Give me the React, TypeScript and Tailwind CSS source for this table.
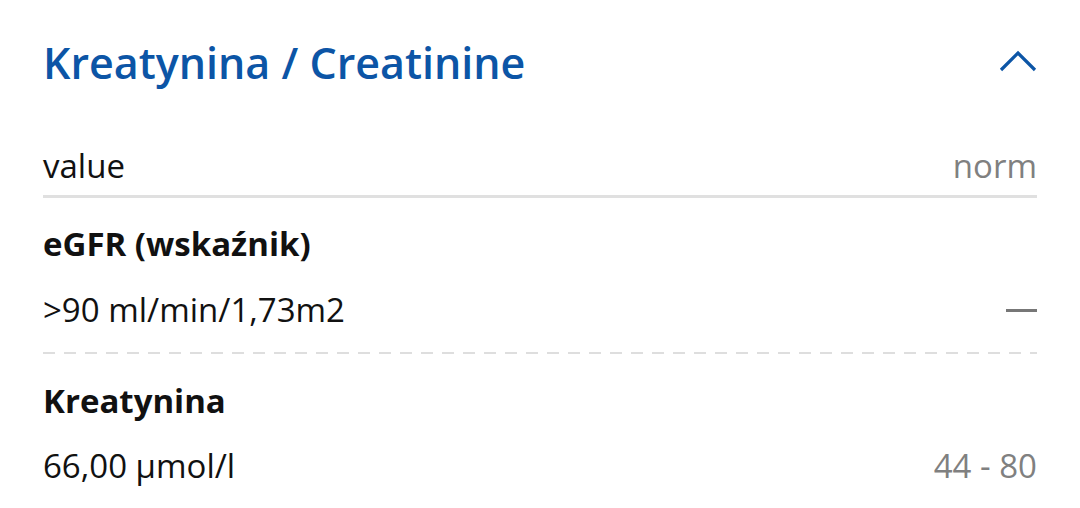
import React from "react";

export default function App() {
  return (
    <div className="w-[1080px] h-[508px] bg-white px-[43px] font-['Open_Sans',sans-serif] text-[#111]">
      <div className="h-[124px] flex items-center justify-between">
        <h1 className="text-[43px] font-semibold text-[#0c55a6] leading-none">Kreatynina / Creatinine</h1>
        <svg width="38" height="22" viewBox="0 0 38 22" className="mt-[-2px]">
          <path d="M2 20 L19 3 L36 20" fill="none" stroke="#0c55a6" strokeWidth="3.2" />
        </svg>
      </div>
      <div className="pt-[22px] pb-[9px] flex justify-between leading-[40px] text-[33px] border-b-[3px] border-[#e0e0e0]">
        <span>value</span>
        <span className="text-[#808080]">norm</span>
      </div>
      <div className="pt-[26px] text-[33px] leading-[40px] font-bold">eGFR (wskaźnik)</div>
      <div className="pt-[26px] flex justify-between items-center text-[33px] leading-[40px]">
        <span>&gt;90 ml/min/1,73m2</span>
        <span className="block w-[31px] h-[3px] bg-[#777]"></span>
      </div>
      <div className="mt-[22px] h-[2px] bg-[repeating-linear-gradient(to_right,#dedede_0_12px,transparent_12px_21px)]"></div>
      <div className="pt-[27px] text-[33px] leading-[40px] font-bold">Kreatynina</div>
      <div className="pt-[25px] flex justify-between text-[33px] leading-[40px]">
        <span>66,00 µmol/l</span>
        <span className="text-[#808080]">44 - 80</span>
      </div>
    </div>
  );
}
